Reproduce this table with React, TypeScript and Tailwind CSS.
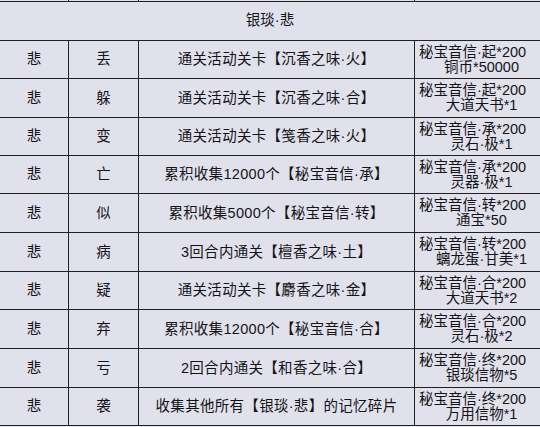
import React from "react";

const rows: { h: string; a: string; b: string; r1: string; r2: string }[] = [
  { h: "h-[37px]", a: "丢", b: "通关活动关卡【沉香之味·火】", r1: "秘宝音信·起*200", r2: "铜币*50000" },
  { h: "h-[38px]", a: "躲", b: "通关活动关卡【沉香之味·合】", r1: "秘宝音信·起*200", r2: "大道天书*1" },
  { h: "h-[37px]", a: "变", b: "通关活动关卡【笺香之味·火】", r1: "秘宝音信·承*200", r2: "灵石·极*1" },
  { h: "h-[37px]", a: "亡", b: "累积收集12000个【秘宝音信·承】", r1: "秘宝音信·承*200", r2: "灵器·极*1" },
  { h: "h-[38px]", a: "似", b: "累积收集5000个【秘宝音信·转】", r1: "秘宝音信·转*200", r2: "通宝*50" },
  { h: "h-[38px]", a: "病", b: "3回合内通关【檀香之味·土】", r1: "秘宝音信·转*200", r2: "螭龙蛋·甘美*1" },
  { h: "h-[37px]", a: "疑", b: "通关活动关卡【麝香之味·金】", r1: "秘宝音信·合*200", r2: "大道天书*2" },
  { h: "h-[38px]", a: "弃", b: "累积收集12000个【秘宝音信·合】", r1: "秘宝音信·合*200", r2: "灵石·极*2" },
  { h: "h-[38px]", a: "亏", b: "2回合内通关【和香之味·合】", r1: "秘宝音信·终*200", r2: "银琰信物*5" },
  { h: "h-[37px]", a: "袭", b: "收集其他所有【银琰·悲】的记忆碎片", r1: "秘宝音信·终*200", r2: "万用信物*1" },
];

export default function App() {
  return (
    <div
      className="w-[540px] h-[427px] bg-[#e1e1eb] text-[#141418] text-[14.5px] overflow-hidden flex flex-col"
      style={{ fontFamily: '"Liberation Sans", "Noto Sans CJK SC", sans-serif' }}
    >
      <div className="h-[1px] grid grid-cols-[69px_70px_276px_1fr]">
        <div className="border-r border-[#222]" />
        <div className="border-r border-[#222]" />
        <div className="border-r border-[#222]" />
        <div />
      </div>
      <div className="border-t border-[#222] h-[39px] flex items-center justify-center leading-none pb-[1px]">
        银琰·悲
      </div>
      {rows.map((r, i) => (
        <div
          key={i}
          className={`border-t border-[#222] grid grid-cols-[69px_70px_276px_1fr] ${r.h} box-content`}
        >
          <div className="border-r border-[#222] flex items-center justify-center leading-none">悲</div>
          <div className="border-r border-[#222] flex items-center justify-center leading-none">{r.a}</div>
          <div className="border-r border-[#222] flex items-center justify-center leading-none whitespace-nowrap tracking-[0.3px]">{r.b}</div>
          <div className="flex flex-col items-center justify-center leading-[15px] whitespace-nowrap pr-[10px]">
            <span>{r.r1}</span>
            <span className="pl-[18px]">{r.r2}</span>
          </div>
        </div>
      ))}
      <div className="border-t border-[#222]" />
    </div>
  );
}
